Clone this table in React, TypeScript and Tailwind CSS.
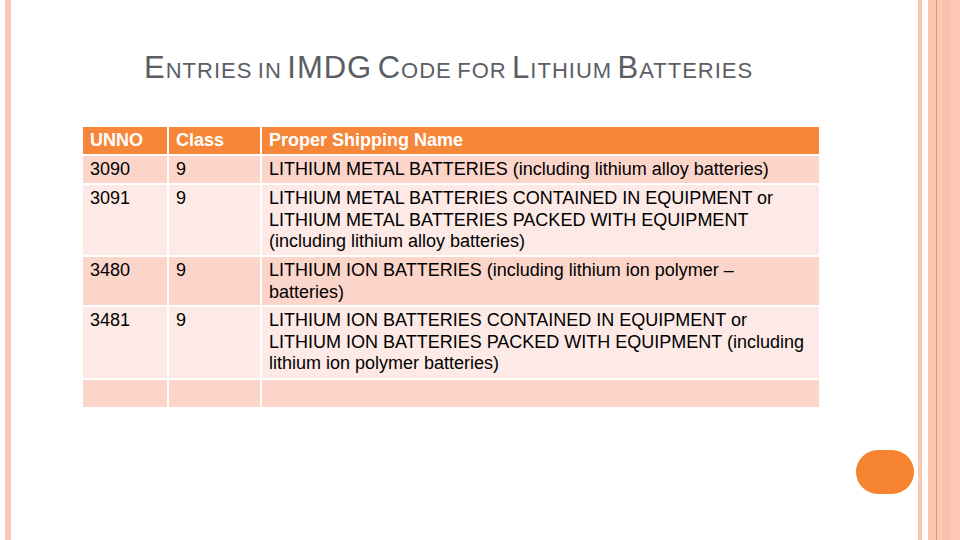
import React from "react";

const rows: [string, string, string[], string][] = [
  ["3090", "9", ["LITHIUM METAL BATTERIES (including lithium alloy batteries)"], "h-[27px] bg-[#fbd5ca]"],
  [
    "3091",
    "9",
    [
      "LITHIUM METAL BATTERIES CONTAINED IN EQUIPMENT or",
      "LITHIUM METAL BATTERIES PACKED WITH EQUIPMENT",
      "(including lithium alloy batteries)",
    ],
    "h-[70px] bg-[#fdeae6]",
  ],
  ["3480", "9", ["LITHIUM ION BATTERIES (including lithium ion polymer –", "batteries)"], "h-[48px] bg-[#fbd5ca]"],
  [
    "3481",
    "9",
    [
      "LITHIUM ION BATTERIES CONTAINED IN EQUIPMENT or",
      "LITHIUM ION BATTERIES PACKED WITH EQUIPMENT (including",
      "lithium ion polymer batteries)",
    ],
    "h-[71px] bg-[#fdeae6]",
  ],
];

// big first letter + small-cap rest; `full` words all big, `small` words all small
function SmallCaps({ text, full = [], small = [] }: { text: string; full?: string[]; small?: string[] }) {
  return (
    <>
      {text.split(" ").map((word, i) => (
        <span key={i}>
          {i > 0 && " "}
          {full.includes(word) ? (
            <span className="text-[31px]">{word}</span>
          ) : small.includes(word) ? (
            <span className="text-[22px]">{word}</span>
          ) : (
            <>
              <span className="text-[31px]">{word[0]}</span>
              <span className="text-[22px]">{word.slice(1)}</span>
            </>
          )}
        </span>
      ))}
    </>
  );
}

function Cell({ className, children }: { className: string; children?: React.ReactNode }) {
  return <div className={"px-[7px] pt-[3px] leading-[21.5px] " + className}>{children}</div>;
}

export default function App() {
  return (
    <div className="relative h-[540px] w-[960px] overflow-hidden bg-white font-['Liberation_Sans',Arial,sans-serif]">
      <div className="absolute left-[5px] top-0 h-full w-[6px] bg-[#f9c6b5]" />
      <div className="absolute left-[918px] top-0 h-full w-[4px] bg-[#f9c6b5]" />
      <div className="absolute left-[928px] top-0 flex h-full w-[32px]">
        <div className="w-[8px] bg-[#fcc6b3]" />
        <div className="w-[1px] bg-[#e8965f]" />
        <div className="w-[6px] bg-[#fdc7b5]" />
        <div className="w-[7px] bg-[#fbc0ab]" />
        <div className="flex-1 bg-[#fdc8b6]" />
      </div>

      <div className="pl-[144px] pt-[50px]">
        <h1 className="tracking-[1px] text-[#5a5e64] leading-[36px] whitespace-nowrap">
          <SmallCaps
            text="ENTRIES IN IMDG CODE FOR LITHIUM BATTERIES"
            full={["IMDG"]}
            small={["IN", "FOR"]}
          />
        </h1>
      </div>

      <div className="ml-[83px] mt-[36px] grid w-[736px] grid-cols-[84px_91px_557px] gap-[2px] text-[18px] text-black">
        <Cell className="h-[27px] bg-[#f6873a] font-bold text-white">UNNO</Cell>
        <Cell className="h-[27px] bg-[#f6873a] font-bold text-white">Class</Cell>
        <Cell className="h-[27px] bg-[#f6873a] font-bold text-white">Proper Shipping Name</Cell>
        {rows.map(([un, cls, name, style]) => (
          <React.Fragment key={un}>
            <Cell className={style}>{un}</Cell>
            <Cell className={style}>{cls}</Cell>
            <Cell className={style}>
              {name.map((l, i) => (
                <div key={i} className="whitespace-nowrap">
                  {l}
                </div>
              ))}
            </Cell>
          </React.Fragment>
        ))}
        <Cell className="h-[27px] bg-[#fbd5ca]" />
        <Cell className="h-[27px] bg-[#fbd5ca]" />
        <Cell className="h-[27px] bg-[#fbd5ca]" />
      </div>

      <div className="absolute left-[856px] top-[450px] h-[44px] w-[58px] rounded-full bg-[#f6832f]" />
    </div>
  );
}
